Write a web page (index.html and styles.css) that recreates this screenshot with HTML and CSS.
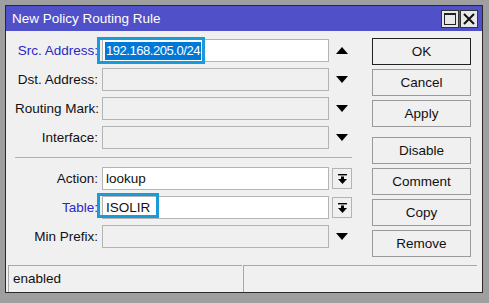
FILE: index.html
```html
<!DOCTYPE html>
<html lang="en">

<head>
  <meta charset="UTF-8">
  <title>New Policy Routing Rule</title>
  <link rel="stylesheet" href="styles.css">
</head>

<body>
  <div class="window">
    <div class="titlebar">
      <span class="title">New Policy Routing Rule</span>
      <div class="title-btns">
        <span class="tbtn"><i class="max"></i></span>
        <span class="tbtn">
          <svg width="12" height="12" viewBox="0 0 12 12"><path d="M1 1L11 11M11 1L1 11" stroke="#111" stroke-width="2"/></svg>
        </span>
      </div>
    </div>

    <div class="content">
      <div class="form">
        <div class="row">
          <label class="blue">Src. Address:</label>
          <div class="field white">
            <span class="sel">192.168.205.0/24</span>
            <span class="mark mark-src"></span>
          </div>
          <span class="side"><svg width="12" height="7" viewBox="0 0 12 7"><path d="M0 7L6 0L12 7Z" fill="#000"/></svg></span>
        </div>
        <div class="row">
          <label>Dst. Address:</label>
          <div class="field"></div>
          <span class="side"><svg width="12" height="7" viewBox="0 0 12 7"><path d="M0 0L6 7L12 0Z" fill="#000"/></svg></span>
        </div>
        <div class="row">
          <label>Routing Mark:</label>
          <div class="field"></div>
          <span class="side"><svg width="12" height="7" viewBox="0 0 12 7"><path d="M0 0L6 7L12 0Z" fill="#000"/></svg></span>
        </div>
        <div class="row">
          <label>Interface:</label>
          <div class="field"></div>
          <span class="side"><svg width="12" height="7" viewBox="0 0 12 7"><path d="M0 0L6 7L12 0Z" fill="#000"/></svg></span>
        </div>

        <hr class="sep">

        <div class="row">
          <label>Action:</label>
          <div class="field white">lookup</div>
          <span class="side drop"><svg width="9" height="10" viewBox="0 0 9 10"><rect x="0" y="0" width="9" height="1.4" fill="#000"/><rect x="3" y="2.5" width="3" height="3" fill="#000"/><path d="M0 5L4.5 10L9 5Z" fill="#000"/></svg></span>
        </div>
        <div class="row">
          <label class="blue">Table:</label>
          <div class="field white">
            ISOLIR
            <span class="mark mark-table"></span>
          </div>
          <span class="side drop"><svg width="9" height="10" viewBox="0 0 9 10"><rect x="0" y="0" width="9" height="1.4" fill="#000"/><rect x="3" y="2.5" width="3" height="3" fill="#000"/><path d="M0 5L4.5 10L9 5Z" fill="#000"/></svg></span>
        </div>
        <div class="row">
          <label>Min Prefix:</label>
          <div class="field"></div>
          <span class="side"><svg width="12" height="7" viewBox="0 0 12 7"><path d="M0 0L6 7L12 0Z" fill="#000"/></svg></span>
        </div>
      </div>

      <div class="buttons">
        <button class="default">OK</button>
        <button>Cancel</button>
        <button>Apply</button>
        <button class="gap">Disable</button>
        <button>Comment</button>
        <button>Copy</button>
        <button>Remove</button>
      </div>
    </div>

    <div class="status">
      <div class="cell">enabled</div>
      <div class="cell"></div>
    </div>
  </div>
</body>

</html>
```

FILE: styles.css
```css
html,
body {
  margin: 0;
  padding: 0;
}

body {
  width: 489px;
  height: 303px;
  background: #9f9f9f;
  padding: 5px;
  box-sizing: border-box;
  font-family: "Liberation Sans", Arial, sans-serif;
  font-size: 13.5px;
  color: #111;
}

.window {
  width: 478px;
  height: 288px;
  box-sizing: border-box;
  border: 1px solid #2a2a2a;
  background: #f0f0f0;
  display: flex;
  flex-direction: column;
}

.titlebar {
  height: 25px;
  background: #5050c8;
  color: #fff;
  display: flex;
  align-items: center;
  justify-content: space-between;
  padding: 0 4px 0 6px;
  flex-shrink: 0;
}

.title {
  font-size: 13.5px;
}

.title-btns {
  display: flex;
}

.tbtn {
  width: 18px;
  height: 18px;
  box-sizing: border-box;
  border: 1px solid #333;
  background: #e8e8e8;
  display: flex;
  align-items: center;
  justify-content: center;
  margin-left: 1px;
}

.tbtn .max {
  width: 12px;
  height: 12px;
  box-sizing: border-box;
  border: 1px solid #222;
  border-top-width: 2px;
}

.content {
  flex: 1;
  display: flex;
  padding: 5px 11px 0 9px;
}

.form {
  width: 337px;
}

.row {
  height: 29px;
  display: flex;
  align-items: center;
}

.row label {
  width: 83px;
  text-align: right;
  margin-right: 4px;
  white-space: nowrap;
}

.row label.blue {
  color: #2a2ac4;
}

.field {
  position: relative;
  width: 227px;
  height: 23px;
  box-sizing: border-box;
  border: 1px solid #b4b4b4;
  background: #f0f0f0;
  display: flex;
  align-items: center;
  padding-left: 3px;
}

.field.white {
  background: #fff;
}

.sel {
  background: #0078d7;
  color: #fff;
  font-size: 13px;
  letter-spacing: -0.45px;
  padding: 1px 1px 2px 1px;
  margin-left: -1px;
}

.mark {
  position: absolute;
  border: 3px solid #1a9ad8;
}

.mark-src {
  left: -6px;
  top: -3px;
  width: 102px;
  height: 21px;
}

.mark-table {
  left: -6px;
  top: -4px;
  width: 56px;
  height: 19px;
}

.side {
  width: 20px;
  height: 21px;
  margin-left: 3px;
  display: flex;
  align-items: center;
  justify-content: center;
}

.side.drop {
  box-sizing: border-box;
  border: 1px solid #b4b4b4;
  background: #f0f0f0;
}

.sep {
  border: 0;
  border-top: 1px solid #b0b0b0;
  margin: 5px 0 6px 0;
}

.buttons {
  margin-left: 20px;
  padding-top: 2px;
  display: flex;
  flex-direction: column;
}

.buttons button {
  width: 99px;
  height: 27px;
  margin-bottom: 4px;
  border: 1px solid #9a9a9a;
  background: #f0f0f0;
  font-family: "Liberation Sans", Arial, sans-serif;
  font-size: 13.5px;
  color: #111;
  padding: 0;
}

.buttons button.default {
  border-color: #222;
}

.buttons button.gap {
  margin-top: 6px;
}

.status {
  height: 27px;
  display: flex;
  padding: 0 5px 0 2px;
  flex-shrink: 0;
}

.cell {
  box-sizing: border-box;
  border-top: 1px solid #a8a8a8;
  border-left: 1px solid #a8a8a8;
  padding: 5px 0 0 4px;
}

.cell:first-child {
  width: 234px;
  margin-right: 1px;
}

.cell:last-child {
  flex: 1;
}
```
